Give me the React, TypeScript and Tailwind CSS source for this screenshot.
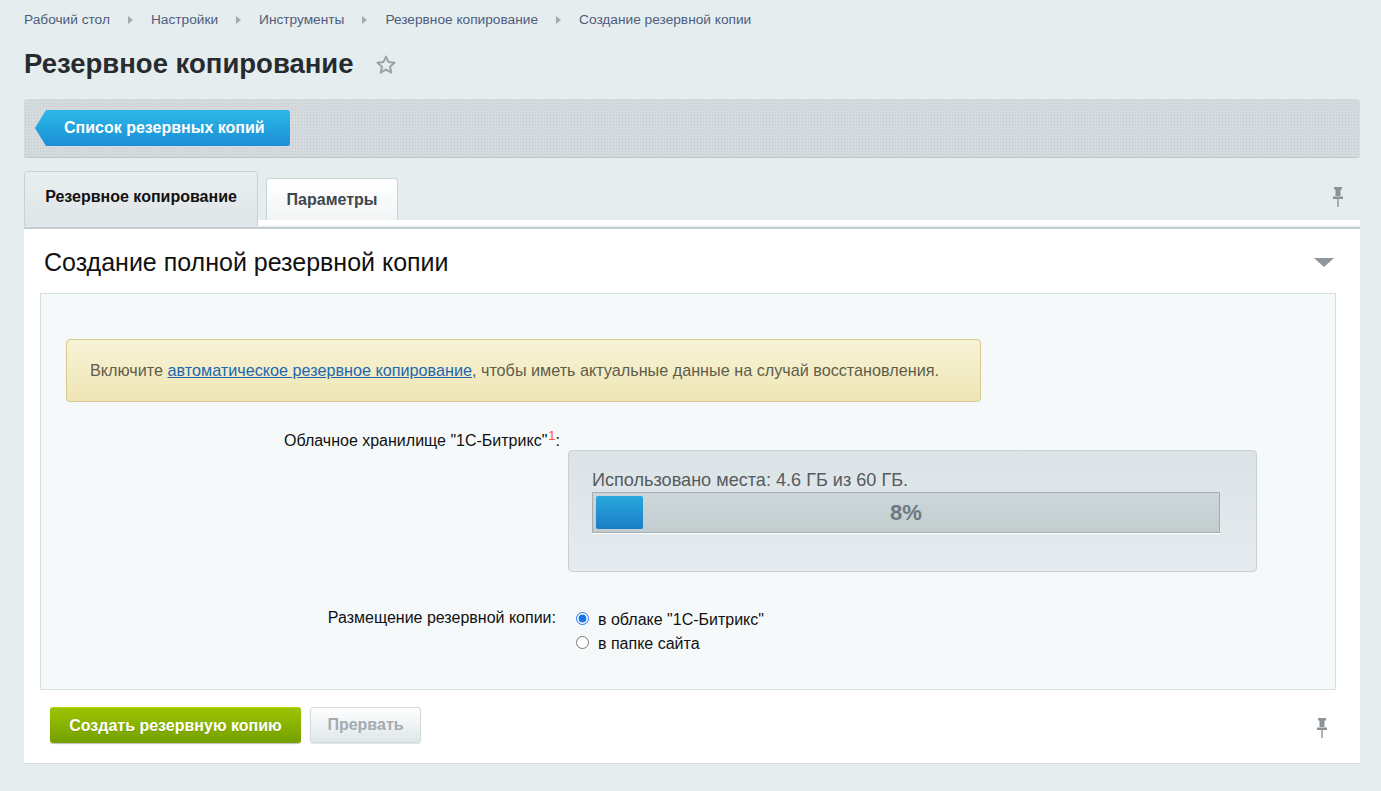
import React from 'react';

const crumbs = ['Рабочий стол', 'Настройки', 'Инструменты', 'Резервное копирование', 'Создание резервной копии'];

const Pin: React.FC = () => (
  <svg width="12" height="20" viewBox="0 0 12 20" className="text-[#8b9398]">
    <rect x="2" y="0" width="8" height="2.5" rx="0.5" fill="currentColor" />
    <rect x="3.5" y="2" width="5" height="7" fill="currentColor" />
    <path d="M1 9.5 L11 9.5 L11 12 L1 12 Z" fill="currentColor" />
    <rect x="5.3" y="12" width="1.4" height="8" fill="currentColor" />
  </svg>
);

const Star: React.FC = () => (
  <svg width="22" height="22" viewBox="0 0 24 24" fill="none" stroke="#9ba3a8" strokeWidth="2.2" strokeLinejoin="round">
    <path d="M12 2.8l2.8 6 6.5.7-4.9 4.4 1.4 6.4L12 17l-5.8 3.3 1.4-6.4-4.9-4.4 6.5-.7z" />
  </svg>
);

export default function App() {
  return (
    <div className="min-h-screen bg-[#e6edef] pl-6 pr-[21px] pt-3 pb-7 font-['Liberation_Sans',Arial,sans-serif]">
      {/* breadcrumbs */}
      <div className="flex items-center text-[13.7px] leading-4 text-[#4d5c7d]">
        {crumbs.map((c, i) => (
          <React.Fragment key={c}>
            {i > 0 && (
              <span className="mx-[18px] inline-block h-0 w-0 border-y-[4px] border-l-[5px] border-y-transparent border-l-[#a3abb0]" />
            )}
            <span>{c}</span>
          </React.Fragment>
        ))}
      </div>

      {/* title */}
      <div className="mt-[20px] flex items-center">
        <h1 className="text-[27.5px] font-bold leading-[31px] text-[#262b2f]">Резервное копирование</h1>
        <span className="ml-[21px] mt-[2px]">
          <Star />
        </span>
      </div>

      {/* toolbar */}
      <div className="mt-5 h-[59px] rounded-[3px] border-b border-[#bfc7cb] bg-[#d4dadd] bg-[radial-gradient(#c4cbcf_0.8px,transparent_0.9px)] bg-[length:3px_3px] pl-[11px] pt-[11px]">
        <button className="flex h-9 w-[255px] items-center rounded-r-[3px] bg-gradient-to-b from-[#2bb8e8] to-[#1e8ed6] pl-[29px] text-[16px] font-bold text-white shadow-[0_1px_1px_rgba(0,0,0,0.2)] [clip-path:polygon(11px_0,100%_0,100%_100%,11px_100%,0_50%)]">
          Список резервных копий
        </button>
      </div>

      {/* tabs */}
      <div className="mt-[13px] flex items-end">
        <div className="relative z-10 -mb-[6px] flex h-[55px] w-[234px] items-center justify-center rounded-t-[4px] border border-b-0 border-[#c9d1d5] bg-gradient-to-b from-[#e9eef0] to-[#dfe5e8] pb-1 text-[16px] font-bold text-[#111]">
          Резервное копирование
        </div>
        <div className="ml-2 flex h-[42px] w-[132px] items-center justify-center rounded-t-[4px] border border-b-0 border-[#ccd4d8] bg-gradient-to-b from-[#ffffff] to-[#f2f5f6] text-[16px] font-bold text-[#3f474d]">
          Параметры
        </div>
        <div className="flex flex-1 justify-end self-center pr-[16px] pt-[2px]">
          <Pin />
        </div>
      </div>

      {/* panel */}
      <div className="bg-white shadow-[0_1px_1px_rgba(0,0,0,0.08)]">
        <div className="h-[6px] bg-white" />
        <div className="h-[3px] border-t border-[#e4e9eb] bg-[#c5cdd1]" />
        <div className="flex items-center justify-between pl-5 pr-[26px] pt-[19px]">
          <h2 className="text-[25px] leading-7 text-[#111]">Создание полной резервной копии</h2>
          <span className="inline-block h-0 w-0 border-x-[10px] border-t-[9px] border-x-transparent border-t-[#8e979c]" />
        </div>

        <div className="ml-4 mr-6 mt-[17px] border border-[#d6e0e5] bg-[#f5f9fa] pb-[33px]">
          <div className="ml-[25px] mt-[45px] flex h-[63px] w-[915px] items-center rounded-[4px] border border-[#d6c78e] bg-gradient-to-b from-[#f7f3d6] to-[#efe6b6] pl-[23px] text-[16.2px] text-[#5f5c49]">
            <span>
              Включите{' '}
              <a className="text-[#2067b0] underline">автоматическое резервное копирование</a>, чтобы иметь актуальные
              данные на случай восстановления.
            </span>
          </div>

          <div className="mt-[29px] grid grid-cols-[527px_1fr] text-[16px] text-[#111]">
            <div className="pr-[8px] text-right leading-[20px]">
              Облачное хранилище "1С-Битрикс"
              <sup className="ml-[1px] text-[13px] text-[#ff5a1f]">1</sup>:
            </div>
            <div className="mt-[19px] w-[689px] rounded-[4px] border border-[#c9d1d5] bg-gradient-to-b from-[#dce3e6] to-[#e5ebee] pb-[38px] pl-[23px] pt-[19px]">
              <div className="text-[18.1px] leading-[20px] text-[#555b60]">Использовано места: 4.6 ГБ из 60 ГБ.</div>
              <div className="relative mt-[2px] h-[41px] w-[628px] border border-[#a4adb1] bg-gradient-to-b from-[#cdd6d8] to-[#c3cdcf] p-[3px] shadow-[0_1px_0_#fff]">
                <div className="h-full rounded-[2px] bg-gradient-to-b from-[#29a7dd] to-[#1b7ec6]" style={{ width: 47 }} />
                <div className="absolute inset-0 flex items-center justify-center text-[22px] font-bold text-[#6c7982]">8%</div>
              </div>
            </div>

            <div className="mt-[36px] pr-[12px] text-right leading-[20px]">Размещение резервной копии:</div>
            <div className="mt-[36px] flex flex-col pl-[8px]">
              <label className="flex h-[24px] items-center gap-[9px]">
                <input type="radio" name="loc" defaultChecked className="m-0 mb-[3px] h-[13px] w-[13px] accent-[#1a73e8]" />
                <span className="leading-[20px]">в облаке "1С-Битрикс"</span>
              </label>
              <label className="flex h-[24px] items-center gap-[9px]">
                <input type="radio" name="loc" className="m-0 mb-[3px] h-[13px] w-[13px]" />
                <span className="leading-[20px]">в папке сайта</span>
              </label>
            </div>
          </div>
        </div>

        <div className="flex items-center pb-5 pl-[26px] pr-[32px] pt-[17px]">
          <button className="h-9 w-[251px] rounded-[3px] border-t border-[#b8d400] bg-gradient-to-b from-[#9cc300] to-[#74a000] text-[16px] font-bold text-white shadow-[0_1px_1px_rgba(0,0,0,0.25)] [text-shadow:0_1px_0_rgba(0,0,0,0.15)]">
            Создать резервную копию
          </button>
          <button className="ml-[9px] h-9 w-[111px] rounded-[3px] border border-[#d3dadd] bg-gradient-to-b from-[#ffffff] to-[#dfe6e9] text-[16px] font-bold text-[#a4acb1] shadow-[0_1px_1px_rgba(0,0,0,0.12)]">
            Прервать
          </button>
          <div className="ml-auto pt-[6px]">
            <Pin />
          </div>
        </div>
      </div>
    </div>
  );
}
